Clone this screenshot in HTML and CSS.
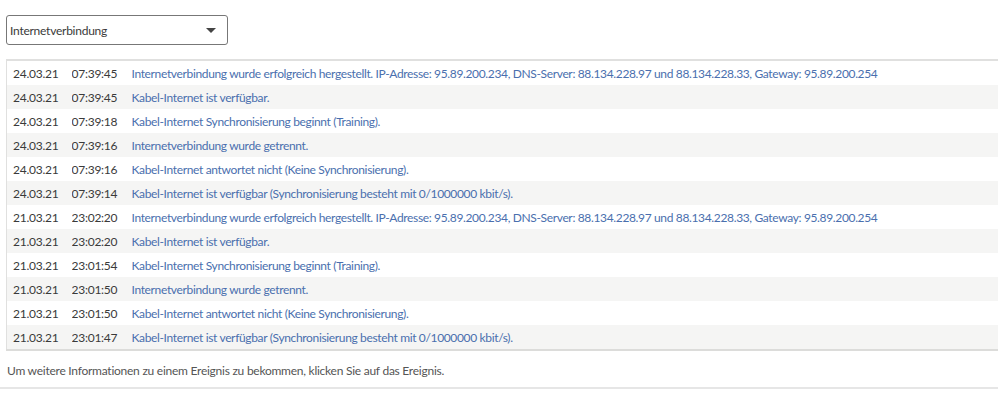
FILE: index.html
```html
<!DOCTYPE html>
<html lang="de">
<head>
    <meta charset="UTF-8">
    <title>Ereignisse</title>
    <link rel="stylesheet" href="styles.css">
</head>
<body>
    <div class="page">
        <div class="filter">
            <span>Internetverbindung</span>
            <svg class="caret" width="10" height="6" viewBox="0 0 10 6"><path d="M0 0 H10 L5 5 Z" fill="#444"/></svg>
        </div>

        <table class="events">
            <colgroup>
                <col class="col-date">
                <col class="col-time">
                <col>
            </colgroup>
            <tbody>
                <tr><td class="date">24.03.21</td><td>07:39:45</td><td class="msg">Internetverbindung wurde erfolgreich hergestellt. IP-Adresse: 95.89.200.234, DNS-Server: 88.134.228.97 und 88.134.228.33, Gateway: 95.89.200.254</td></tr>
                <tr><td class="date">24.03.21</td><td>07:39:45</td><td class="msg">Kabel-Internet ist verfügbar.</td></tr>
                <tr><td class="date">24.03.21</td><td>07:39:18</td><td class="msg">Kabel-Internet Synchronisierung beginnt (Training).</td></tr>
                <tr><td class="date">24.03.21</td><td>07:39:16</td><td class="msg">Internetverbindung wurde getrennt.</td></tr>
                <tr><td class="date">24.03.21</td><td>07:39:16</td><td class="msg">Kabel-Internet antwortet nicht (Keine Synchronisierung).</td></tr>
                <tr><td class="date">24.03.21</td><td>07:39:14</td><td class="msg">Kabel-Internet ist verfügbar (Synchronisierung besteht mit 0/1000000 kbit/s).</td></tr>
                <tr><td class="date">21.03.21</td><td>23:02:20</td><td class="msg">Internetverbindung wurde erfolgreich hergestellt. IP-Adresse: 95.89.200.234, DNS-Server: 88.134.228.97 und 88.134.228.33, Gateway: 95.89.200.254</td></tr>
                <tr><td class="date">21.03.21</td><td>23:02:20</td><td class="msg">Kabel-Internet ist verfügbar.</td></tr>
                <tr><td class="date">21.03.21</td><td>23:01:54</td><td class="msg">Kabel-Internet Synchronisierung beginnt (Training).</td></tr>
                <tr><td class="date">21.03.21</td><td>23:01:50</td><td class="msg">Internetverbindung wurde getrennt.</td></tr>
                <tr><td class="date">21.03.21</td><td>23:01:50</td><td class="msg">Kabel-Internet antwortet nicht (Keine Synchronisierung).</td></tr>
                <tr><td class="date">21.03.21</td><td>23:01:47</td><td class="msg">Kabel-Internet ist verfügbar (Synchronisierung besteht mit 0/1000000 kbit/s).</td></tr>
            </tbody>
        </table>

        <p class="hint">Um weitere Informationen zu einem Ereignis zu bekommen, klicken Sie auf das Ereignis.</p>
    </div>
</body>
</html>
```

FILE: styles.css
```css
body {
    margin: 0;
    font-family: Lato, "Open Sans", sans-serif;
    font-size: 12px;
    letter-spacing: -0.25px;
    color: #3a3a3a;
    background: #fff;
}
.page {
    padding-top: 15px;
    border-bottom: 2px solid #e6e6e6;
    height: 372px;
}
.filter {
    margin-left: 6px;
    width: 222px;
    height: 30px;
    border: 1px solid #777;
    border-radius: 3px;
    display: flex;
    align-items: center;
    justify-content: space-between;
    padding: 0 11px 0 3px;
    box-sizing: border-box;
}
.caret {
    margin-top: 1px;
}
.events {
    margin: 14px 0 0 6px;
    width: calc(100% - 6px);
    table-layout: fixed;
    border-collapse: collapse;
    border-top: 2px solid #e0e0df;
    border-left: 1px solid #e0e0df;
    border-bottom: 2px solid #dcdcda;
}
.col-date {
    width: 65px;
}
.col-time {
    width: 60px;
}
.events td {
    height: 24px;
    padding: 0;
    white-space: nowrap;
    overflow: hidden;
}
.events td.date {
    padding-left: 6px;
}
.events tr:nth-child(even) {
    background: #f5f5f4;
}
.msg {
    color: #4a6fae;
    letter-spacing: -0.35px;
}
.hint {
    margin: 12px 0 0 7px;
    color: #555;
}
```
